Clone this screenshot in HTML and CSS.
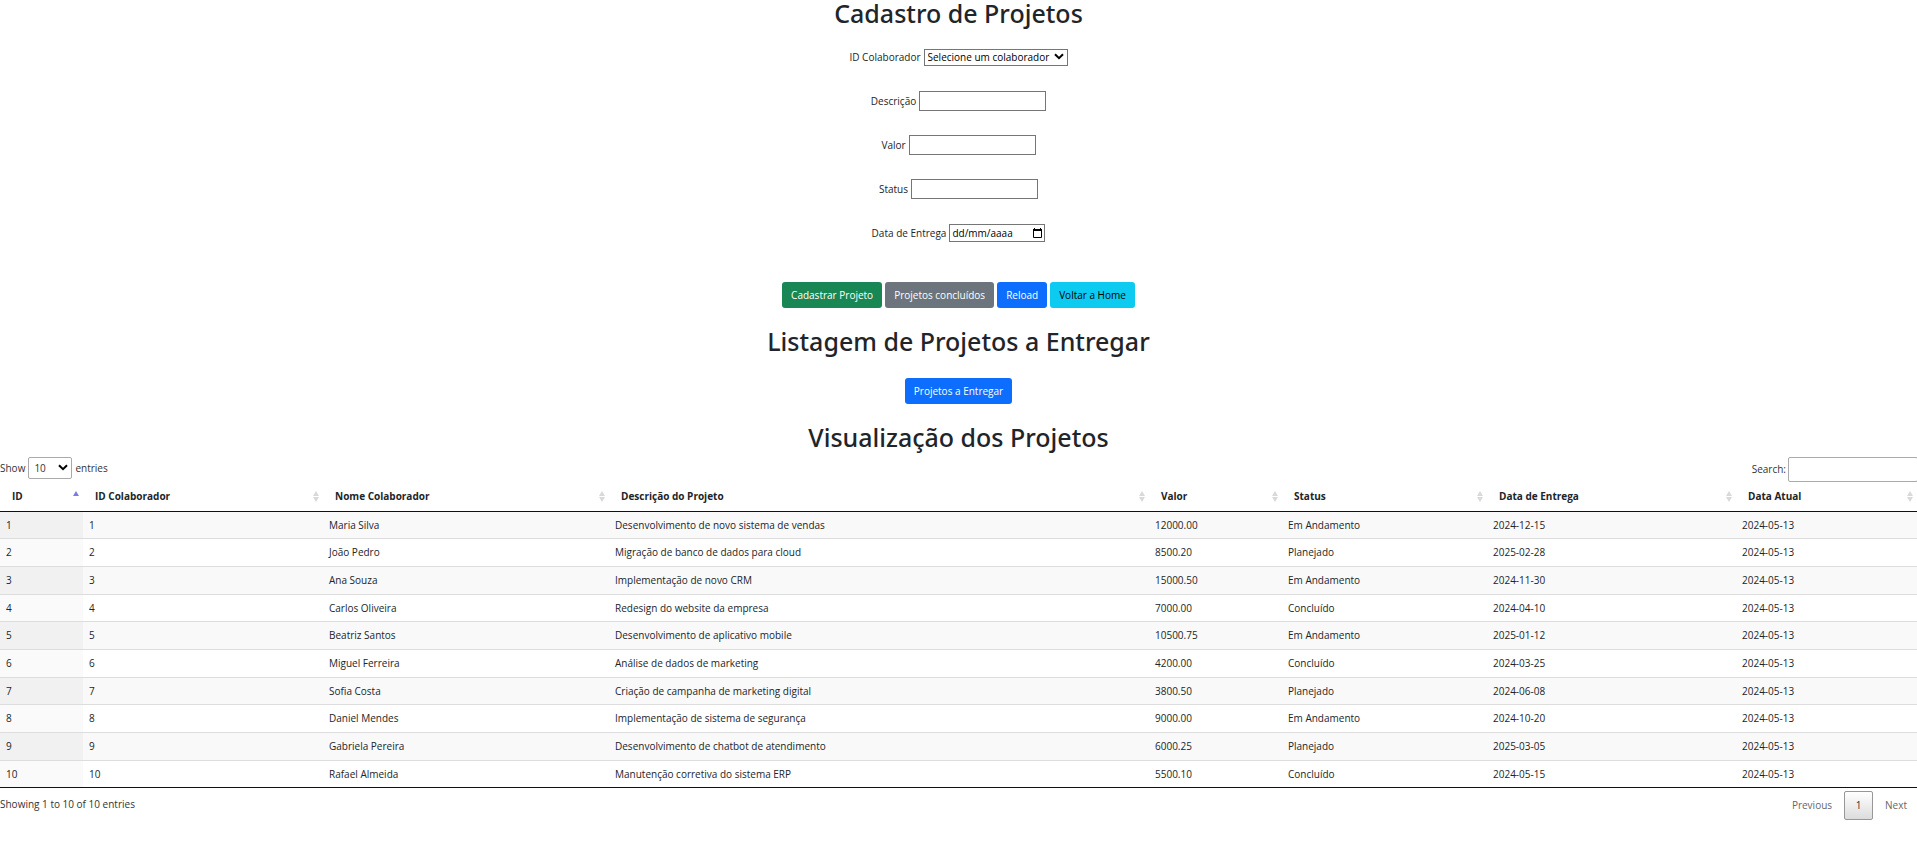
FILE: index.html
```html
<!DOCTYPE html>
<html lang="pt-BR">
<head>
<meta charset="utf-8">
<title>Cadastro de Projetos</title>
<link rel="stylesheet" href="styles.css">
</head>
<body>
<main>
  <h1>Cadastro de Projetos</h1>
  <form class="form">
    <div class="field">
      <label for="colaborador">ID Colaborador</label>
      <span class="select-wrap">
        <select id="colaborador" class="control control-select"><option>Selecione um colaborador</option></select>
        <svg class="chevron" viewBox="0 0 10 7" aria-hidden="true"><path d="M1 1.2 5 5.2 9 1.2"/></svg>
      </span>
    </div>
    <div class="field"><label for="descricao">Descrição</label><input id="descricao" class="control control-text" type="text"></div>
    <div class="field"><label for="valor">Valor</label><input id="valor" class="control control-text" type="text"></div>
    <div class="field"><label for="status">Status</label><input id="status" class="control control-text" type="text"></div>
    <div class="field">
      <label for="entrega">Data de Entrega</label>
      <span class="date">
        <input id="entrega" class="date-input" type="text" placeholder="dd/mm/aaaa">
        <svg class="calendar" viewBox="0 0 9 10" aria-hidden="true"><path class="cal-frame" d="M.5 1.5h8v8h-8z"/><path class="cal-top" d="M0 1h1V0h1v1h5V0h1v1h1v2H0z"/></svg>
      </span>
    </div>
    <div class="actions">
      <button type="button" class="btn btn-success">Cadastrar Projeto</button>
      <button type="button" class="btn btn-secondary">Projetos concluídos</button>
      <button type="button" class="btn btn-primary">Reload</button>
      <button type="button" class="btn btn-info">Voltar a Home</button>
    </div>
  </form>
  <h2>Listagem de Projetos a Entregar</h2>
  <div class="actions actions-list">
    <button type="button" class="btn btn-primary">Projetos a Entregar</button>
  </div>
  <h2>Visualização dos Projetos</h2>

  <div class="toolbar">
    <label class="length">Show
      <span class="select-wrap">
        <select class="length-select"><option>10</option></select>
        <svg class="chevron" viewBox="0 0 10 7" aria-hidden="true"><path d="M1 1.2 5 5.2 9 1.2"/></svg>
      </span>
      entries</label>
    <label class="search">Search:<input class="search-input" type="search"></label>
  </div>

  <table class="projects">
    <colgroup><col class="c-id"><col class="c-colab"><col class="c-nome"><col class="c-desc"><col class="c-valor"><col class="c-status"><col class="c-entrega"><col class="c-atual"></colgroup>
    <thead>
      <tr><th class="asc">ID</th><th>ID Colaborador</th><th>Nome Colaborador</th><th>Descrição do Projeto</th><th>Valor</th><th>Status</th><th>Data de Entrega</th><th>Data Atual</th></tr>
    </thead>
    <tbody>
      <tr><td>1</td><td>1</td><td>Maria Silva</td><td>Desenvolvimento de novo sistema de vendas</td><td>12000.00</td><td>Em Andamento</td><td>2024-12-15</td><td>2024-05-13</td></tr>
      <tr><td>2</td><td>2</td><td>João Pedro</td><td>Migração de banco de dados para cloud</td><td>8500.20</td><td>Planejado</td><td>2025-02-28</td><td>2024-05-13</td></tr>
      <tr><td>3</td><td>3</td><td>Ana Souza</td><td>Implementação de novo CRM</td><td>15000.50</td><td>Em Andamento</td><td>2024-11-30</td><td>2024-05-13</td></tr>
      <tr><td>4</td><td>4</td><td>Carlos Oliveira</td><td>Redesign do website da empresa</td><td>7000.00</td><td>Concluído</td><td>2024-04-10</td><td>2024-05-13</td></tr>
      <tr><td>5</td><td>5</td><td>Beatriz Santos</td><td>Desenvolvimento de aplicativo mobile</td><td>10500.75</td><td>Em Andamento</td><td>2025-01-12</td><td>2024-05-13</td></tr>
      <tr><td>6</td><td>6</td><td>Miguel Ferreira</td><td>Análise de dados de marketing</td><td>4200.00</td><td>Concluído</td><td>2024-03-25</td><td>2024-05-13</td></tr>
      <tr><td>7</td><td>7</td><td>Sofia Costa</td><td>Criação de campanha de marketing digital</td><td>3800.50</td><td>Planejado</td><td>2024-06-08</td><td>2024-05-13</td></tr>
      <tr><td>8</td><td>8</td><td>Daniel Mendes</td><td>Implementação de sistema de segurança</td><td>9000.00</td><td>Em Andamento</td><td>2024-10-20</td><td>2024-05-13</td></tr>
      <tr><td>9</td><td>9</td><td>Gabriela Pereira</td><td>Desenvolvimento de chatbot de atendimento</td><td>6000.25</td><td>Planejado</td><td>2025-03-05</td><td>2024-05-13</td></tr>
      <tr><td>10</td><td>10</td><td>Rafael Almeida</td><td>Manutenção corretiva do sistema ERP</td><td>5500.10</td><td>Concluído</td><td>2024-05-15</td><td>2024-05-13</td></tr>
    </tbody>
  </table>

  <div class="footer">
    <div class="info">Showing 1 to 10 of 10 entries</div>
    <nav class="pages">
      <a class="page" href="#">Previous</a>
      <a class="page page-current" href="#">1</a>
      <a class="page" href="#">Next</a>
    </nav>
  </div>
</main>
</body>
</html>
```

FILE: styles.css
```css
* { box-sizing: border-box; }

body {
  margin: 0;
  overflow-x: hidden;
  background: #fff;
  color: #212529;
  font: 10px/16px "Open Sans", "Noto Sans", sans-serif;
}

input, select, button { font: inherit; color: inherit; margin: 0; }

h1, h2 {
  margin: 0;
  font-size: 25px;
  line-height: 30px;
  font-weight: 500;
  text-align: center;
  font-family: "Noto Sans", sans-serif;
}
h1 { line-height: 26px; }

.form { padding-top: 21px; }

.field {
  display: flex;
  justify-content: center;
  align-items: center;
  gap: 3px;
  height: 20px;
  margin-bottom: 24px;
}

.control {
  border: 1px solid #767676;
  border-radius: 0;
  background: #fff;
  color: #000;
}

.select-wrap { position: relative; display: inline-flex; }
.control-select { appearance: none; width: 144px; height: 17px; padding: 0 3px; line-height: 15px; }
.control-text { width: 127px; height: 20px; padding: 1px 2px; }

.chevron {
  position: absolute;
  right: 4px;
  top: 50%;
  width: 10px;
  height: 7px;
  margin-top: -4px;
  fill: none;
  stroke: #000;
  stroke-width: 2;
  pointer-events: none;
}

.date {
  display: flex;
  align-items: center;
  width: 96px;
  height: 18px;
  padding: 0 2px;
  border: 1px solid #767676;
  color: #000;
}
.date-input { flex: 1; min-width: 0; padding: 0; border: 0; outline: 0; background: none; }
.date-input::placeholder { color: #000; opacity: 1; }
.calendar { width: 9px; height: 10px; fill: #000; }
.cal-frame { fill: none; stroke: #000; }

.actions { display: flex; justify-content: center; gap: 3px; padding: 15px 0 18px; }
.actions-list { padding: 22px 0 18px; }

.btn {
  height: 26px;
  padding: 0 9px;
  border: 0;
  border-radius: 3px;
  color: #fff;
}
.btn-success { background: #198754; }
.btn-secondary { background: #6c757d; }
.btn-primary { background: #0d6efd; }
.btn-info { background: #0dcaf0; color: #000; }

.toolbar { display: flex; justify-content: space-between; align-items: flex-start; padding-top: 4px; color: #333; }
.length, .search { display: flex; align-items: center; }
.length { gap: 3px; height: 24px; }
.search { height: 26px; }

.length-select {
  appearance: none;
  width: 44px;
  height: 22px;
  padding: 0 5px;
  border: 1px solid #aaa;
  border-radius: 2px;
  background: transparent;
}
.search-input {
  width: 130px;
  height: 25px;
  margin: 0 -1px 0 2px;
  padding: 3px;
  border: 1px solid #aaa;
  border-radius: 2px;
  background: transparent;
}

.projects { width: 100%; table-layout: fixed; border-collapse: separate; border-spacing: 0; border-bottom: 1px solid #111; }
.c-id { width: 83px; }
.c-colab { width: 240px; }
.c-nome { width: 286px; }
.c-desc { width: 540px; }
.c-valor { width: 133px; }
.c-status { width: 205px; }
.c-entrega { width: 249px; }
.c-atual { width: 181px; }

.projects th {
  position: relative;
  padding: 6px 12px 7px;
  border-bottom: 1px solid #111;
  text-align: left;
  font-weight: 700;
}
.projects th::before, .projects th::after {
  content: "";
  position: absolute;
  right: 4px;
  border: 3px solid transparent;
}
.projects th::before { top: 9px; border-bottom: 5px solid #d9d9d9; border-top: 0; }
.projects th::after { top: 15px; border-top: 5px solid #d9d9d9; border-bottom: 0; }
.projects th.asc::before { border-bottom-color: #7b7be6; }
.projects th.asc::after { display: none; }

.projects td { padding: 5px 6px 6px; border-top: 1px solid #ddd; }
.projects tr:nth-child(3n+1) td { padding-bottom: 5px; }
.projects tbody tr:first-child td { border-top: 0; }
.projects tr:nth-child(odd) td { background: #f9f9f9; }
.projects tr:nth-child(odd) td:first-child { background: #f1f1f1; }
.projects tr:nth-child(even) td:first-child { background: #fafafa; }

.footer { display: flex; justify-content: space-between; align-items: flex-start; padding-top: 3px; color: #333; }
.info { padding-top: 5px; }
.pages { display: flex; gap: 2px; }
.page {
  min-width: 29px;
  padding: 5px 9px 6px;
  border: 1px solid transparent;
  border-radius: 2px;
  color: #666;
  text-align: center;
  text-decoration: none;
}
.page-current { border-color: #979797; background: linear-gradient(#fff, #dcdcdc); color: #333; }
```
